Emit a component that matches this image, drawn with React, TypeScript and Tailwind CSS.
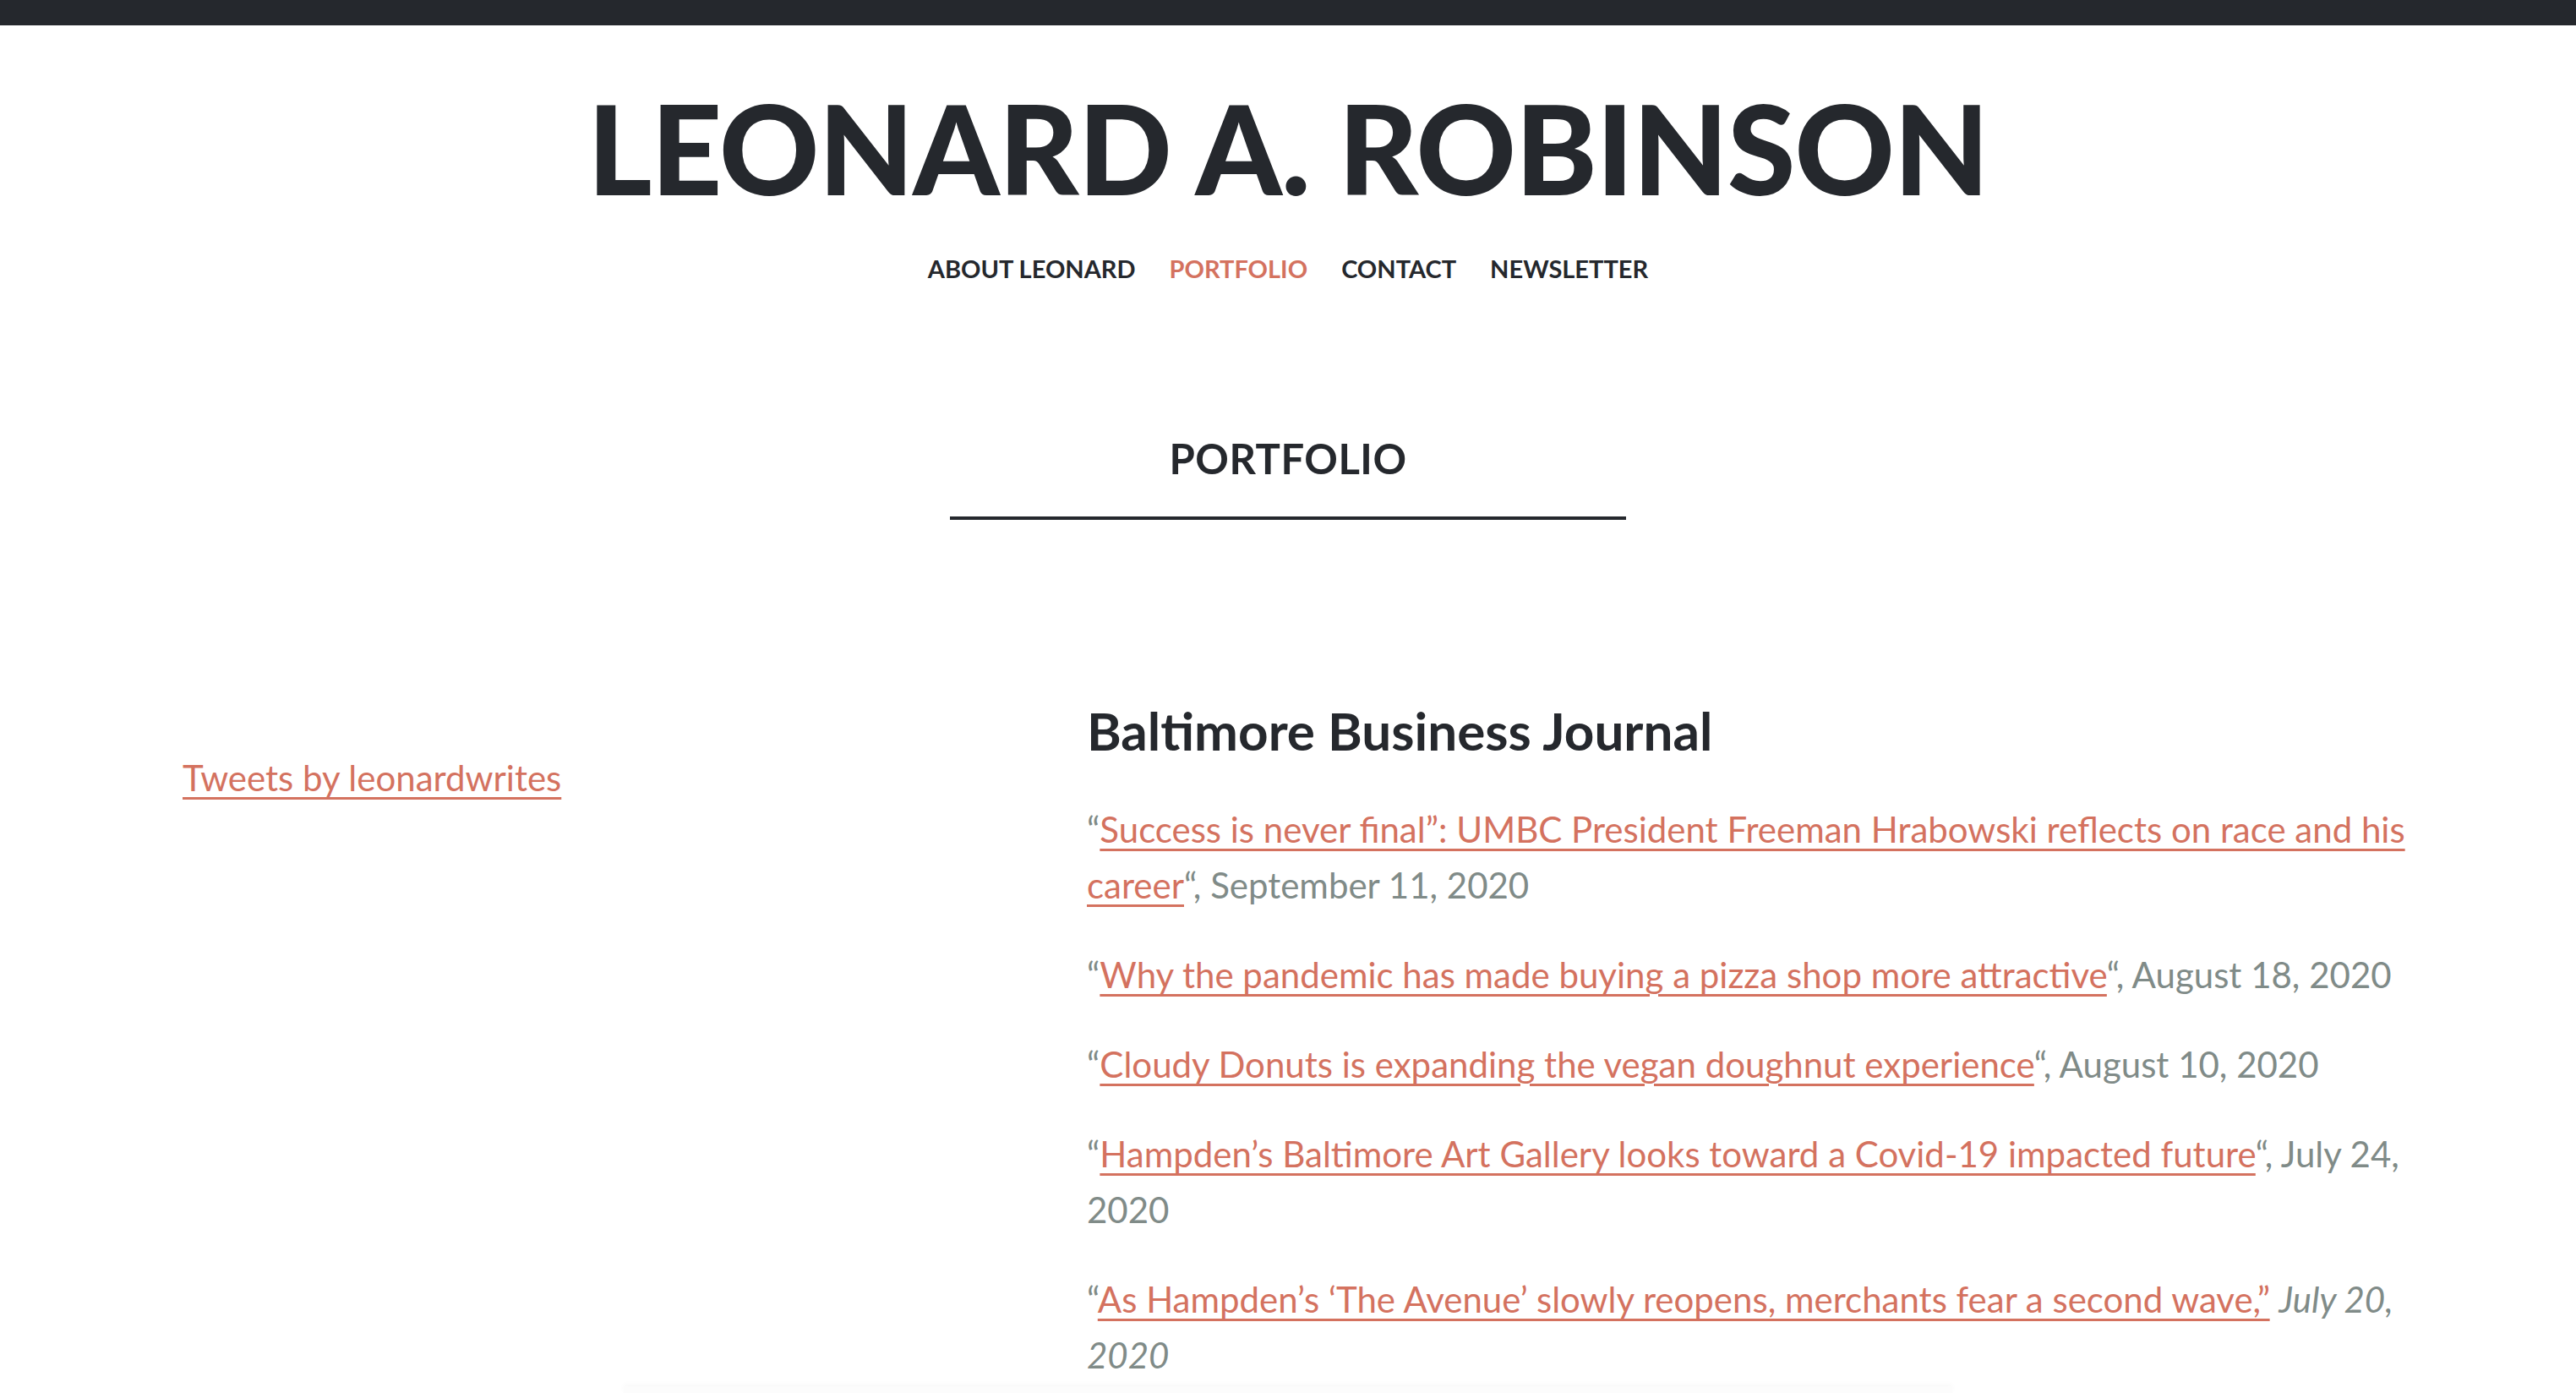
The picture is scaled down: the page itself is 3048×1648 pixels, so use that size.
import React, { type JSX } from "react";

const nav = [
  { label: "ABOUT LEONARD", active: false },
  { label: "PORTFOLIO", active: true },
  { label: "CONTACT", active: false },
  { label: "NEWSLETTER", active: false },
];

const articles = [
  {
    title: "Success is never final”: UMBC President Freeman Hrabowski reflects on race and his career",
    tail: "“, September 11, 2020",
  },
  {
    title: "Why the pandemic has made buying a pizza shop more attractive",
    tail: "“, August 18, 2020",
  },
  {
    title: "Cloudy Donuts is expanding the vegan doughnut experience",
    tail: "“, August 10, 2020",
  },
  {
    title: "Hampden’s Baltimore Art Gallery looks toward a Covid-19 impacted future",
    tail: "“, July 24, 2020",
  },
];

const linkCls =
  "text-[#d4725f] underline decoration-[3px] underline-offset-[7px]";

export default function App(): JSX.Element {
  return (
    <div className="min-h-screen bg-white font-['Lato','Liberation_Sans',sans-serif] text-[#25282d]">
      <div className="h-[30px] bg-[#25282d]" />

      <header className="flex flex-col items-center pt-[72px]">
        <h1 className="text-[146px] leading-none font-black tracking-[-1px]">LEONARD A. ROBINSON</h1>
        <nav className="mt-[55px] flex gap-[40px] text-[29px] leading-none font-bold">
          {nav.map((n) => (
            <a key={n.label} className={n.active ? "text-[#d4725f]" : "text-[#25282d]"}>
              {n.label}
            </a>
          ))}
        </nav>
      </header>

      <section className="flex flex-col items-center pt-[186px]">
        <h2 className="text-[49px] leading-none font-bold tracking-[0.5px]">PORTFOLIO</h2>
        <div className="mt-[44px] h-[4px] w-[800px] bg-[#25282d]" />
      </section>

      <main className="mt-[216px] flex pl-[216px]">
        <aside className="w-[1070px] shrink-0 pt-[58px]">
          <a className={`${linkCls} text-[42px]`}>Tweets by leonardwrites</a>
        </aside>

        <div className="w-[1610px] shrink-0 text-[42px] leading-[66px] text-[#808b88]">
          <h3 className="mb-[51px] text-[62px] leading-[66px] font-bold text-[#25282d]">
            Baltimore Business Journal
          </h3>
          {articles.map((a) => (
            <p key={a.title} className="mb-[40px]">
              “<a className={linkCls}>{a.title}</a>
              {a.tail}
            </p>
          ))}
          <p className="mb-[40px]">
            “<a className={linkCls}>As Hampden’s ‘The Avenue’ slowly reopens, merchants fear a second wave,”</a>{" "}
            <em>July 20, 2020</em>
          </p>
        </div>
      </main>

      <div className="fixed bottom-0 left-[738px] h-[8px] w-[1572px] bg-[#fcfcfc] shadow-[0_-2px_6px_rgba(0,0,0,0.03)]" />
    </div>
  );
}
